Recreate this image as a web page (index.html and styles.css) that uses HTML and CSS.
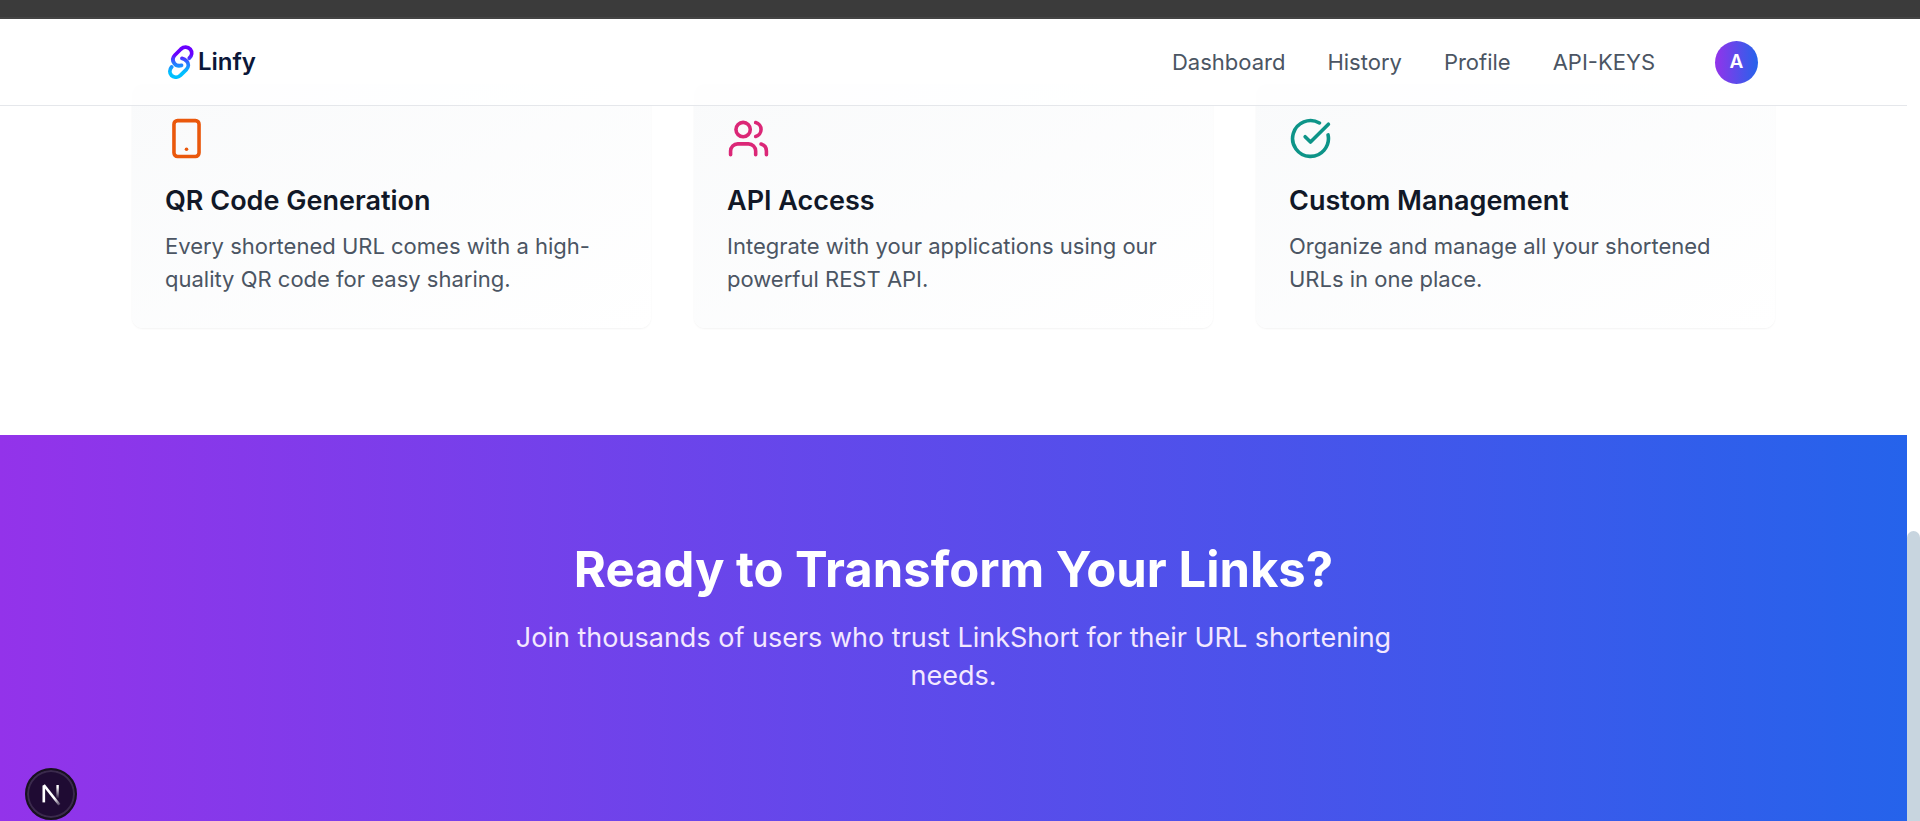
FILE: index.html
```html
<!DOCTYPE html>
<html lang="en">
<head>
<meta charset="utf-8">
<meta name="viewport" content="width=device-width, initial-scale=1">
<title>Linfy</title>
<link rel="stylesheet" href="styles.css">
</head>
<body>
<div class="chrome"></div>
<div class="window">
  <div class="page">
    <header class="header">
      <div class="header-inner">
        <a class="logo" href="#">
          <svg class="logo-mark" viewBox="0 0 26 34" aria-hidden="true">
            <defs>
              <linearGradient id="logo-grad" gradientUnits="userSpaceOnUse" x1="0" y1="2" x2="0" y2="32">
                <stop offset="0.25" stop-color="#6a00ff"/>
                <stop offset="0.5" stop-color="#2f6bff"/>
                <stop offset="0.85" stop-color="#00c0ff"/>
              </linearGradient>
            </defs>
            <g fill="none" stroke="url(#logo-grad)" stroke-width="3.8" stroke-linecap="round" stroke-linejoin="round">
              <path d="M21.300 13.200C24 10.600 24.500 7 22.300 4.300C19.800 1.300 15.800 1.400 13 4L7 10C4.600 12.400 4.300 15.600 6.300 18.300C8 20.600 10.800 21.200 13.500 20.400"/>
              <path d="M3.600 22C1.500 24.500 1.300 28 3.400 30.300C6 32.800 9.800 32.700 12.400 30.300L18.300 24.600C20.700 22.200 21 18.800 18.800 16.200C17.500 14.700 16 13.600 14 13.300"/>
            </g>
          </svg>
          <span class="logo-text">Linfy</span>
        </a>
        <nav class="nav">
          <a href="#">Dashboard</a>
          <a href="#">History</a>
          <a href="#">Profile</a>
          <a href="#">API-KEYS</a>
          <button class="avatar" type="button">A</button>
        </nav>
      </div>
    </header>
    <main>
      <section class="features">
        <article class="card">
          <svg class="icon icon-orange" viewBox="0 0 24 24" aria-hidden="true"><rect x="5" y="2" width="14" height="20" rx="2"/><path d="M12 18h.01"/></svg>
          <h3>QR Code Generation</h3>
          <p>Every shortened URL comes with a high-quality QR code for easy sharing.</p>
        </article>
        <article class="card">
          <svg class="icon icon-pink" viewBox="0 0 24 24" aria-hidden="true"><path d="M16 21v-2a4 4 0 0 0-4-4H6a4 4 0 0 0-4 4v2"/><circle cx="9" cy="7" r="4"/><path d="M22 21v-2a4 4 0 0 0-3-3.870"/><path d="M16 3.130a4 4 0 0 1 0 7.750"/></svg>
          <h3>API Access</h3>
          <p>Integrate with your applications using our powerful REST API.</p>
        </article>
        <article class="card">
          <svg class="icon icon-teal" viewBox="0 0 24 24" aria-hidden="true"><path d="M21.801 10A10 10 0 1 1 17 3.335"/><path d="m9 11 3 3L22 4"/></svg>
          <h3>Custom Management</h3>
          <p>Organize and manage all your shortened URLs in one place.</p>
        </article>
      </section>
      <section class="cta">
        <h2>Ready to Transform Your Links?</h2>
        <p>Join thousands of users who trust LinkShort for their URL shortening needs.</p>
      </section>
    </main>
  </div>
  <div class="scrollbar" aria-hidden="true"><div class="thumb"></div></div>
</div>
<button class="dev-badge" type="button" aria-label="Open Next.js Dev Tools">
  <svg viewBox="0 0 40 40" aria-hidden="true">
    <defs>
      <linearGradient id="n-diag" gradientUnits="userSpaceOnUse" x1="20" y1="21" x2="28" y2="31"><stop offset="0.3" stop-color="#fff"/><stop offset="1" stop-color="#fff" stop-opacity="0"/></linearGradient>
      <linearGradient id="n-bar" gradientUnits="userSpaceOnUse" x1="0" y1="12" x2="0" y2="24"><stop offset="0.2" stop-color="#fff"/><stop offset="1" stop-color="#fff" stop-opacity="0"/></linearGradient>
    </defs>
    <path d="M14 27V13" stroke="#fff" stroke-width="2.200" fill="none"/>
    <path d="M14 12.500 27 29" stroke="url(#n-diag)" stroke-width="2.200" fill="none"/>
    <path d="M24.500 12.500h2v11h-2z" fill="url(#n-bar)"/>
  </svg>
</button>
</body>
</html>
```
FILE: styles.css
```css
* { box-sizing: border-box; }

body {
  margin: 0;
  height: 100vh;
  display: flex;
  flex-direction: column;
  overflow: hidden;
  background: #fff;
  font-family: Inter, "Liberation Sans", sans-serif;
  font-size: 22px;
  line-height: 33px;
  color: #4b5563;
}

h2, h3, p { margin: 0; }

.chrome {
  flex: none;
  height: 19px;
  background: #3b3b3b;
  border-bottom: 2px solid #444;
}

.window {
  flex: 1;
  min-height: 0;
  display: flex;
}

.page {
  flex: 1;
  display: flex;
  flex-direction: column;
}

.header {
  position: relative;
  z-index: 1;
  background: rgba(255, 255, 255, 0.8);
  border-bottom: 1px solid #e5e7eb;
}

.header-inner {
  max-width: 1643px;
  height: 86px;
  margin: 0 auto;
  padding: 0 17px 0 36px;
  display: flex;
  align-items: center;
  justify-content: space-between;
}

.logo {
  display: flex;
  align-items: center;
  gap: 4px;
  color: #0b1739;
  text-decoration: none;
}

.logo-mark { width: 26px; height: 34px; }

.logo-text {
  font-size: 24px;
  line-height: 32px;
  font-weight: 600;
}

.nav {
  display: flex;
  align-items: center;
  gap: 42px;
}

.nav a {
  color: #4b5563;
  text-decoration: none;
}

.avatar {
  width: 43px;
  height: 43px;
  margin-left: 18px;
  padding: 0;
  border: 0;
  border-radius: 50%;
  background: linear-gradient(to right, #9333ea, #2563eb);
  color: #fff;
  font: 600 19px/28px Inter, "Liberation Sans", sans-serif;
}

main {
  flex: 1;
  min-height: 0;
  display: flex;
  flex-direction: column;
}

.features {
  width: 100%;
  max-width: 1643px;
  margin: -22px auto 0;
  padding-bottom: 107px;
  display: grid;
  grid-template-columns: repeat(3, 1fr);
  gap: 43px;
}

.card {
  padding: 33px 33px 32px;
  border-radius: 11px;
  background: linear-gradient(to bottom right, #f9fafb, #fff);
  box-shadow: 0 1px 2px rgba(0, 0, 0, 0.05);
}

.icon {
  display: block;
  width: 43px;
  height: 43px;
  margin-bottom: 22px;
  fill: none;
  stroke: currentColor;
  stroke-width: 2;
  stroke-linecap: round;
  stroke-linejoin: round;
}

.icon-orange { color: #ea580c; }
.icon-pink { color: #db2777; }
.icon-teal { color: #0d9488; }

.card h3 {
  margin-bottom: 10px;
  font-size: 27px;
  line-height: 38px;
  font-weight: 600;
  color: #111827;
}

.cta {
  flex: 1;
  padding: 108px 24px;
  background: linear-gradient(to right, #9333ea, #2563eb);
  text-align: center;
}

.cta h2 {
  margin-bottom: 22px;
  font-size: 49px;
  line-height: 54px;
  font-weight: 700;
  color: #fff;
}

.cta p {
  max-width: 924px;
  margin: 0 auto;
  font-size: 27px;
  line-height: 38px;
  color: #f3e8ff;
}

.scrollbar {
  width: 13px;
  padding-top: 512px;
  display: flex;
  background: #fff;
}

.thumb {
  flex: 1;
  border-radius: 7px 7px 0 0;
  background: #c8d5df;
}

.dev-badge {
  position: fixed;
  left: 25px;
  bottom: 1px;
  z-index: 2;
  width: 52px;
  height: 52px;
  padding: 0;
  border: 2px solid #17111f;
  border-radius: 50%;
  background: #1f0b33;
  box-shadow: inset 0 0 0 2px #3b2a4d;
}

.dev-badge svg { display: block; width: 100%; }
```
